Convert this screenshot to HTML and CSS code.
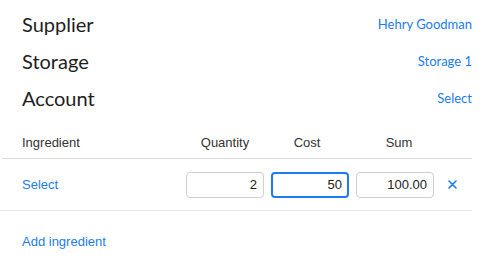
FILE: index.html
```html
<!DOCTYPE html>
<html lang="en">
<head>
  <meta charset="UTF-8">
  <title>Purchase</title>
  <link rel="stylesheet" href="styles.css">
</head>
<body>
  <div class="page">
    <div class="info">
      <div class="info-row">
        <span class="info-label">Supplier</span>
        <a class="info-value" href="#">Hehry Goodman</a>
      </div>
      <div class="info-row">
        <span class="info-label">Storage</span>
        <a class="info-value" href="#">Storage 1</a>
      </div>
      <div class="info-row">
        <span class="info-label">Account</span>
        <a class="info-value" href="#">Select</a>
      </div>
    </div>

    <div class="items">
      <div class="grid head">
        <span class="col-name">Ingredient</span>
        <span class="col-num">Quantity</span>
        <span class="col-num h-cost">Cost</span>
        <span class="col-num h-sum">Sum</span>
        <span></span>
      </div>
      <div class="grid item">
        <a class="link" href="#">Select</a>
        <input class="num" type="text" value="2">
        <input class="num focused" type="text" value="50">
        <input class="num" type="text" value="100.00" readonly>
        <span class="remove">
          <svg width="9" height="9" viewBox="0 0 9 9">
            <path d="M1 1 L8 8 M8 1 L1 8" stroke="#1b7cf0" stroke-width="1.6" stroke-linecap="round"/>
          </svg>
        </span>
      </div>
      <div class="add">
        <a class="link" href="#">Add ingredient</a>
      </div>
    </div>
  </div>
</body>
</html>
```

FILE: styles.css
```css
body {
  margin: 0;
  background: #fff;
  font-family: 'Liberation Sans', Arial, sans-serif;
  color: #222;
}

a {
  text-decoration: none;
}

.page {
  width: 472px;
  padding-top: 5px;
}

.info {
  padding-left: 22px;
}

.info-row {
  height: 37px;
  display: flex;
  align-items: center;
  justify-content: space-between;
}

.info-label {
  font-family: 'Lato', sans-serif;
  font-size: 20px;
  color: #1e1e1e;
}

.info-value {
  font-family: 'Lato', sans-serif;
  font-size: 13px;
  color: #1b7cf0;
}

.grid {
  display: grid;
  grid-template-columns: 1fr 78px 78px 78px 31px;
  column-gap: 7px;
  align-items: center;
  padding-left: 22px;
}

.head {
  margin-left: 2px;
  padding-left: 20px;
  padding-top: 19px;
  padding-bottom: 7px;
  line-height: 16px;
  font-size: 13px;
  color: #333;
  border-bottom: 1px solid #dcdcdc;
}

.col-num {
  text-align: center;
}

.h-cost {
  padding-right: 6px;
}

.h-sum {
  padding-left: 8px;
}

.item {
  height: 51px;
  border-bottom: 1px solid #e6e6e6;
}

.link {
  font-size: 13px;
  color: #1b7cf0;
}

.num {
  box-sizing: border-box;
  width: 78px;
  height: 26px;
  border: 1px solid #cfcfcf;
  border-radius: 4px;
  padding: 0 6px;
  text-align: right;
  font-family: 'Liberation Sans', Arial, sans-serif;
  font-size: 13px;
  color: #222;
  outline: none;
}

.num.focused {
  border: 2px solid #1b7cf0;
  padding-right: 5px;
}

.remove {
  display: flex;
  padding-left: 7px;
}

.add {
  padding: 22px 0 0 22px;
  line-height: 16px;
}
```
